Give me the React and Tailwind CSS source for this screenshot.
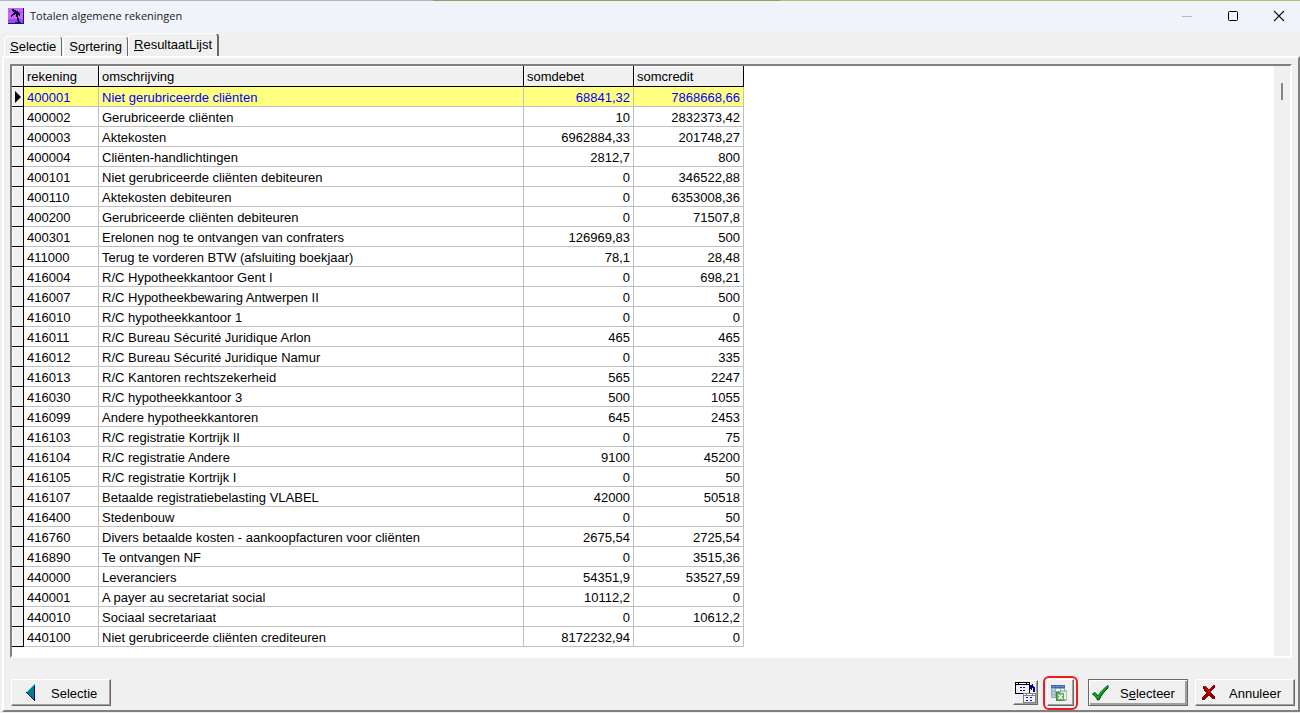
// App.jsx
import React, { useState } from 'react';

const rekeningen = [
  ['400001', 'Niet gerubriceerde cliënten', '68841,32', '7868668,66'],
  ['400002', 'Gerubriceerde cliënten', '10', '2832373,42'],
  ['400003', 'Aktekosten', '6962884,33', '201748,27'],
  ['400004', 'Cliënten-handlichtingen', '2812,7', '800'],
  ['400101', 'Niet gerubriceerde cliënten debiteuren', '0', '346522,88'],
  ['400110', 'Aktekosten debiteuren', '0', '6353008,36'],
  ['400200', 'Gerubriceerde cliënten debiteuren', '0', '71507,8'],
  ['400301', 'Erelonen nog te ontvangen van confraters', '126969,83', '500'],
  ['411000', 'Terug te vorderen BTW (afsluiting boekjaar)', '78,1', '28,48'],
  ['416004', 'R/C Hypotheekkantoor Gent I', '0', '698,21'],
  ['416007', 'R/C Hypotheekbewaring Antwerpen II', '0', '500'],
  ['416010', 'R/C hypotheekkantoor 1', '0', '0'],
  ['416011', 'R/C Bureau Sécurité Juridique Arlon', '465', '465'],
  ['416012', 'R/C Bureau Sécurité Juridique Namur', '0', '335'],
  ['416013', 'R/C Kantoren rechtszekerheid', '565', '2247'],
  ['416030', 'R/C hypotheekkantoor 3', '500', '1055'],
  ['416099', 'Andere hypotheekkantoren', '645', '2453'],
  ['416103', 'R/C registratie Kortrijk II', '0', '75'],
  ['416104', 'R/C registratie Andere', '9100', '45200'],
  ['416105', 'R/C registratie Kortrijk I', '0', '50'],
  ['416107', 'Betaalde registratiebelasting VLABEL', '42000', '50518'],
  ['416400', 'Stedenbouw', '0', '50'],
  ['416760', 'Divers betaalde kosten - aankoopfacturen voor cliënten', '2675,54', '2725,54'],
  ['416890', 'Te ontvangen NF', '0', '3515,36'],
  ['440000', 'Leveranciers', '54351,9', '53527,59'],
  ['440001', 'A payer au secretariat social', '10112,2', '0'],
  ['440010', 'Sociaal secretariaat', '0', '10612,2'],
  ['440100', 'Niet gerubriceerde cliënten crediteuren', '8172232,94', '0'],
];

const AppIcon = () => (
  <svg width="16" height="16" viewBox="0 0 16 16" shapeRendering="crispEdges">
    <rect width="16" height="16" fill="#c565f7" />
    <path d="M0 11h15v4H0zM1 3h2v1H1zM11 4h3v1h-3z" fill="#9c50e8" />
    <path d="M15 0h1v16H0v-1h15z" fill="#20108a" />
    <path d="M4 1h2v1h2v1h2v1h1v1h1v3h-1V7h-1v3h1v3h1v2h-2v-2H9V9H8V6H7v1H5v1H4v1H3V7h1V6h1V5h1V4H5V3H4z" fill="#150a40" />
    <path d="M7 14h6v1H7z" fill="#20108a" />
  </svg>
);

const ArrowIcon = () => (
  <svg width="10" height="17" viewBox="0 0 10 17" shapeRendering="crispEdges">
    <path d="M9 0v17h-1L0 9V8L8 0z" fill="#008080" />
    <path d="M8 0h1v1H8zM7 1h1v1H7zM6 2h1v1H6zM5 3h1v1H5zM4 4h1v1H4zM3 5h1v1H3zM2 6h1v1H2zM1 7h1v1H1z" fill="#00d8d8" />
    <path d="M8 2h1v15H8zM0 8h1v1H0zM1 9h1v1H1zM2 10h1v1H2zM3 11h1v1H3zM4 12h1v1H4zM5 13h1v1H5zM6 14h1v1H6zM7 15h1v1H7z" fill="#000080" />
  </svg>
);

const WindowsIcon = () => (
  <svg width="21" height="21" viewBox="0 0 21 21" shapeRendering="crispEdges">
    <path d="M0 0h15v12H0z" fill="#000" />
    <path d="M1 1h2v1H1zM4 1h7v1H4zM12 1h2v1h-2z" fill="#fff" />
    <path d="M1 3h13v8H1z" fill="#f0f0f0" />
    <path d="M5 5h2v1H5zM8 5h2v1H8zM5 8h2v1H5zM8 8h2v1H8z" fill="#0000ff" />
    <path d="M17 2h1v2h1v1h1v5h-2V6h-1v2h-1V7h-1V6h-1V4h1V3h2z" fill="#000090" />
    <path d="M8 11h13v10H8z" fill="#808080" />
    <path d="M9 12h2v1H9zM12 12h5v1h-5zM18 12h2v1h-2z" fill="#fff" />
    <path d="M9 14h11v6H9z" fill="#f0f0f0" />
    <path d="M11 15h2v1h-2zM15 15h2v1h-2zM11 18h2v1h-2zM15 18h2v1h-2z" fill="#0000ff" />
  </svg>
);

const ExcelIcon = () => (
  <svg width="16" height="16" viewBox="0 0 16 16">
    <rect width="14" height="13" fill="#8fa9cc" />
    <rect width="14" height="3" fill="#3c68ac" />
    <path d="M1 1h3v1H1zM5 1h4v1H5zM10 1h3v1h-3z" fill="#6a90c8" />
    <path d="M1 4h3v2H1zM1 7h3v2H1zM1 10h3v2H1z" fill="#b9d8ae" />
    <path d="M5 4h4v2H5zM10 4h3v2h-3zM5 7h4v2H5zM10 7h3v2h-3zM5 10h4v2H5z" fill="#f6f9ff" />
    <rect x="5" y="7" width="9" height="9" fill="#3f8a45" />
    <path d="M9 6h7v9H9z" fill="#e4f1e1" stroke="#76ab72" />
    <rect x="6" y="8" width="7" height="7" fill="#5fa862" />
    <path d="M7.500 9.500l4 4.500M11.500 9.500l-4 4.500" stroke="#fff" strokeWidth="1.400" />
  </svg>
);

const CheckIcon = () => (
  <svg width="17" height="16" viewBox="0 0 17 16">
    <path d="M.5 9L3 7.500l3 3.500C8.500 7 11.500 3.500 16 .5V3c-4 3.500-6.500 7-9 12H5.500C4.500 12.500 3 11 .5 9z" fill="#009800" stroke="#003c30" strokeWidth="1" />
    <path d="M2 8.500l4 4C8.500 8 11.500 4.500 15.500 1.500" stroke="#10d010" strokeWidth="1" fill="none" />
  </svg>
);

const CrossIcon = () => (
  <svg width="14" height="15" viewBox="0 0 14 15" shapeRendering="crispEdges">
    <path d="M1 1h3l3 4 4-5h2v2L9 7l4 5v2h-3l-3-4-4 5H0v-2l4-5-3-5z" fill="#900000" />
    <path d="M2 1h1l4 5 4-5h1L8 7H6z" fill="#d00000" />
  </svg>
);

const Tab = ({ active, onClick, children }) => (
  <button
    role="tab"
    aria-selected={active}
    onClick={onClick}
    className={
      active
        ? 'h-[23px] px-[5px] pb-px rounded-t-sm border-l border-t border-r-2 border-l-white border-t-white border-r-[#696969] bg-[#f0f0f0]'
        : 'h-5 px-[5px] rounded-t-sm border-l border-t border-r border-l-white border-t-white border-r-[#696969] bg-[#f0f0f0]'
    }
  >
    {children}
  </button>
);

const bevel = 'flex items-center border border-t-white border-l-white border-r-[#696969] border-b-[#696969] bg-[#f0f0f0] shadow-[inset_-1px_-1px_0_#a0a0a0]';

const kop = 'h-[21px] border-r border-b border-black bg-[#f0f0f0] px-[3px] pt-[2px] pb-0 text-left font-normal shadow-[inset_1px_1px_0_#fff]';

const cel = 'h-5 border-r border-b border-[#c0c0c0] px-[3px] pt-[2px] pb-0';

const App = () => {
  const [tab, setTab] = useState('resultaat');
  const [selected, setSelected] = useState('400001');

  return (
    <div className="flex min-h-screen w-full flex-col bg-[#f0f0f0] font-['Liberation_Sans',Arial,sans-serif] text-[13px] leading-4 text-black">
      {/* Rand van het venster erachter */}
      <div className="flex h-px">
        <div className="w-1/3 bg-[#b4b4b0]" />
        <div className="flex-1 bg-[#9a9a60]" />
        <div className="w-2/5 bg-[#b8b878]" />
      </div>

      {/* Titelbalk */}
      <header className="flex h-[30px] items-center bg-[#f0f3f9] pb-px pl-2 pr-[15px]">
        <AppIcon />
        <h1 className="ml-[6px] flex-1 font-['Open_Sans','Noto_Sans',sans-serif] text-[11px] text-[#1a1a1a]">Totalen algemene rekeningen</h1>
        <div className="flex items-center gap-[34px]">
          <button aria-label="Minimaliseren">
            <svg width="12" height="12"><path d="M1 6.500h10" stroke="#b8bac0" /></svg>
          </button>
          <button aria-label="Maximaliseren">
            <svg width="12" height="12"><rect x="1.500" y="1.500" width="9" height="9" rx="1" fill="none" stroke="#000" /></svg>
          </button>
          <button aria-label="Sluiten">
            <svg width="12" height="12"><path d="M1 1l10 10M11 1L1 11" stroke="#111" strokeWidth="1.100" /></svg>
          </button>
        </div>
      </header>

      <div role="tablist" className="flex h-[25px] items-end pl-1">
        <Tab active={tab === 'selectie'} onClick={() => setTab('selectie')}><u>S</u>electie</Tab>
        <div className="w-px" />
        <Tab active={tab === 'sortering'} onClick={() => setTab('sortering')}>S<u>o</u>rtering</Tab>
        <Tab active={tab === 'resultaat'} onClick={() => setTab('resultaat')}><u>R</u>esultaatLijst</Tab>
      </div>

      <main className="mb-px ml-[2px] flex flex-1 flex-col border-2 border-t-white border-l-white border-r-[#808080] border-b-[#808080]">
        {/* Resultaten */}
        <div className="mx-[6px] mt-[6px] flex flex-1 border-2 border-t-[#808080] border-l-[#808080] border-r-white border-b-white bg-white">
          <div className="flex-1">
            <table className="w-[732px] table-fixed border-separate border-spacing-0">
              <colgroup>
                <col className="w-3" />
                <col className="w-[75px]" />
                <col className="w-[425px]" />
                <col className="w-[110px]" />
                <col className="w-[110px]" />
              </colgroup>
              <thead>
                <tr>
                  <th className="h-[21px] border-r border-b border-black bg-[#f0f0f0] p-0 shadow-[inset_1px_1px_0_#fff]" />
                  <th className={kop}>rekening</th>
                  <th className={kop}>omschrijving</th>
                  <th className={kop}>somdebet</th>
                  <th className={kop}>somcredit</th>
                </tr>
              </thead>
              <tbody>
                {rekeningen.map(([nr, omschrijving, debet, credit]) => (
                  <tr
                    key={nr}
                    onClick={() => setSelected(nr)}
                    className={nr === selected ? 'bg-[#ffff80] text-[#0000ff]' : ''}
                  >
                    <td className="h-5 border-r border-b border-black bg-[#f0f0f0] p-0 pl-[3px] shadow-[inset_1px_1px_0_#fff]">
                      {nr === selected && (
                        <svg className="block" width="6" height="12" viewBox="0 0 6 12"><path d="M0 0l6 6-6 6z" fill="#000" /></svg>
                      )}
                    </td>
                    <td className={cel}>{nr}</td>
                    <td className={cel}>{omschrijving}</td>
                    <td className={`${cel} text-right`}>{debet}</td>
                    <td className={`${cel} text-right`}>{credit}</td>
                  </tr>
                ))}
              </tbody>
            </table>
          </div>
          {/* Schuifbalk */}
          <div className="flex w-4 justify-center bg-[#f0f0f0] pt-[17px]">
            <div className="h-[17px] w-[2px] bg-[#868686]" />
          </div>
        </div>

        {/* Knoppen */}
        <footer className="flex h-[52px] items-center pl-[7px] pr-[3px] pt-[17px]">
          <button className={`${bevel} h-[27px] w-[100px] pl-[14px]`}>
            <ArrowIcon />
            <span className="ml-[15px] pt-[2px]">Selectie</span>
          </button>
          <div className="flex-1" />
          <button aria-label="Vensters" className={`${bevel} h-[25px] w-[25px] justify-center`}>
            <WindowsIcon />
          </button>
          <div className="ml-[5px] mr-[10px] flex h-[34px] w-[35px] items-center justify-center rounded-md border-2 border-[#ed1c24]">
            <button aria-label="Exporteren naar Excel" className={`${bevel} h-[27px] w-[27px] pl-[3px]`}>
              <ExcelIcon />
            </button>
          </div>
          <button className="mr-[7px] flex h-[27px] w-[100px] items-center border border-[#696969] bg-[#f0f0f0] pl-[3px] shadow-[inset_1px_1px_0_#fff,inset_-2px_-2px_0_#a0a0a0]">
            <CheckIcon />
            <span className="ml-[11px] pt-[2px]">S<u>e</u>lecteer</span>
          </button>
          <button className={`${bevel} h-[27px] w-[100px] pl-[6px]`}>
            <CrossIcon />
            <span className="ml-[13px] pt-[2px]">Annuleer</span>
          </button>
        </footer>
      </main>
    </div>
  );
};

export default App;
